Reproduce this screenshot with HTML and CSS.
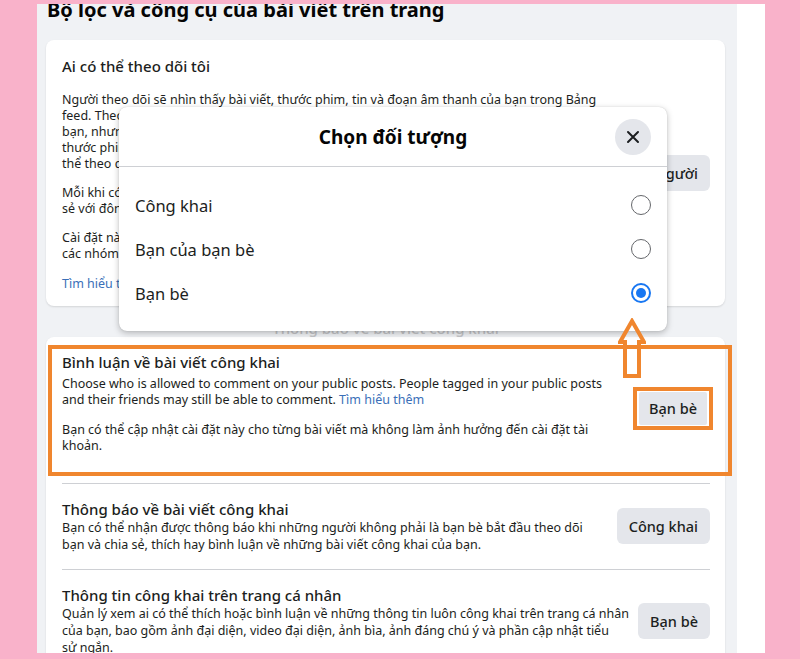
FILE: index.html
```html
<!DOCTYPE html>
<html lang="vi">
<head>
    <meta charset="UTF-8">
    <meta name="viewport" content="width=device-width, initial-scale=1.0">
    <title>Bộ lọc và công cụ của bài viết trên trang</title>
    <link rel="stylesheet" href="styles.css">
</head>
<body>
    <div class="khung">
        <div class="trang">
            <h1 class="tieu-de">Bộ lọc và công cụ của bài viết trên trang</h1>

            <div class="the">
                <div class="muc muc-dau">
                    <div class="noi-dung">
                        <h2>Ai có thể theo dõi tôi</h2>
                        <p>Người theo dõi sẽ nhìn thấy bài viết, thước phim, tin và đoạn âm thanh của bạn trong Bảng<br>feed. Theo mặc định, bạn bè sẽ theo dõi bạn, nhưng bạn cũng có thể cho phép mọi người<br>bạn, nhưng những người không phải là bạn bè cũng có thể xem bài viết,<br>thước phim và tin công khai của bạn. Hãy dùng cài đặt này để chọn ai có<br>thể theo dõi bạn.</p>
                        <p>Mỗi khi có nội dung công khai, bạn có thể chọn chia<br>sẻ với đông đảo mọi người hơn.</p>
                        <p>Cài đặt này không áp dụng cho những người theo dõi bạn trong<br>các nhóm và trang mà bạn tham gia.</p>
                        <a href="#" class="lien-ket">Tìm hiểu thêm</a>
                    </div>
                    <button class="nut">Mọi người</button>
                </div>
            </div>

            <div class="chu-mo">Thông báo về bài viết công khai</div>

            <div class="the the-hai">
                <span class="khung-cam"></span>
                <svg class="mui-ten" width="28" height="62" viewBox="0 0 28 62">
                    <polygon points="14,3 26,24 21,24 21,58 7,58 7,24 2,24" fill="none" stroke="#f0862e" stroke-width="4" stroke-linejoin="miter"/>
                </svg>

                <div class="muc muc-binh-luan">
                    <div class="noi-dung">
                        <h2>Bình luận về bài viết công khai</h2>
                        <p>Choose who is allowed to comment on your public posts. People tagged in your public posts<br>and their friends may still be able to comment. <a href="#" class="lien-ket">Tìm hiểu thêm</a></p>
                        <p>Bạn có thể cập nhật cài đặt này cho từng bài viết mà không làm ảnh hưởng đến cài đặt tài<br>khoản.</p>
                    </div>
                    <span class="vien-nut"><button class="nut">Bạn bè</button></span>
                </div>

                <div class="muc co-vach">
                    <div class="noi-dung">
                        <h2>Thông báo về bài viết công khai</h2>
                        <p>Bạn có thể nhận được thông báo khi những người không phải là bạn bè bắt đầu theo dõi<br>bạn và chia sẻ, thích hay bình luận về những bài viết công khai của bạn.</p>
                    </div>
                    <button class="nut">Công khai</button>
                </div>

                <div class="muc co-vach">
                    <div class="noi-dung">
                        <h2>Thông tin công khai trên trang cá nhân</h2>
                        <p>Quản lý xem ai có thể thích hoặc bình luận về những thông tin luôn công khai trên trang cá nhân<br>của bạn, bao gồm ảnh đại diện, video đại diện, ảnh bìa, ảnh đáng chú ý và phần cập nhật tiểu<br>sử ngắn.</p>
                    </div>
                    <button class="nut">Bạn bè</button>
                </div>
            </div>
        </div>
        <div class="le-phai"></div>

        <div class="hop-thoai">
            <div class="dau-hop">
                <h3>Chọn đối tượng</h3>
                <button class="nut-dong" aria-label="Đóng">
                    <svg width="14" height="14" viewBox="0 0 14 14">
                        <path d="M2 2 L12 12 M12 2 L2 12" stroke="#1c1e21" stroke-width="2" stroke-linecap="round"/>
                    </svg>
                </button>
            </div>
            <div class="lua-chon">
                <label class="dong">Công khai<span class="tron"></span></label>
                <label class="dong">Bạn của bạn bè<span class="tron"></span></label>
                <label class="dong">Bạn bè<span class="tron da-chon"></span></label>
            </div>
        </div>
    </div>
</body>
</html>
```

FILE: styles.css
```css
body {
    margin: 0;
    background-color: #f9b2ca;
    font-family: "Noto Sans", "Open Sans", sans-serif;
    color: #1c1e21;
}
.khung {
    position: relative;
    display: flex;
    width: 728px;
    height: 649px;
    margin: 4px 0 0 37px;
    overflow: hidden;
}
.trang {
    width: 700px;
    background-color: #f0f2f5;
    padding: 0 12px 0 9px;
    box-sizing: border-box;
}
.le-phai {
    flex: 1;
    background-color: #fff;
}
.tieu-de {
    font-size: 20px;
    line-height: 24px;
    font-weight: 700;
    margin: -6px 0 0 1px;
    color: #050505;
}
.the {
    position: relative;
    background-color: #fff;
    border-radius: 8px;
    margin-top: 18px;
    box-shadow: 0 1px 2px rgba(0, 0, 0, 0.12);
}
.muc {
    display: flex;
    align-items: center;
    gap: 24px;
    padding: 16px 15px 16px 16px;
}
.noi-dung {
    flex: 1;
    min-width: 0;
}
.muc h2 {
    font-size: 15px;
    line-height: 20px;
    font-weight: 500;
    margin: 0;
}
.muc p {
    font-size: 12.5px;
    line-height: 16px;
    margin: 0;
    white-space: nowrap;
}
.muc p + p {
    margin-top: 14px;
}
.muc-dau {
    padding-bottom: 14px;
}
.muc-dau h2 {
    margin-bottom: 16px;
}
.muc-dau p + p {
    margin-top: 13px;
}
.muc-dau .lien-ket {
    display: block;
    margin-top: 14px;
    font-size: 12.5px;
    line-height: 16px;
}
.muc-dau .nut {
    margin-bottom: 2px;
}
.lien-ket {
    color: #3a6fb8;
    text-decoration: none;
}
.nut {
    font-family: inherit;
    font-size: 14.5px;
    font-weight: 500;
    height: 36px;
    padding: 0 12px;
    background-color: #e4e6eb;
    color: #1c1e21;
    border: none;
    border-radius: 6px;
    cursor: pointer;
    flex-shrink: 0;
}
.chu-mo {
    text-align: center;
    color: #c4c5c8;
    font-size: 15px;
    font-weight: 500;
    line-height: 20px;
    margin: 12px 0 -1px;
}
.the-hai {
    margin-top: 0;
    border-radius: 8px 8px 0 0;
    padding-bottom: 20px;
}
.muc-binh-luan {
    padding: 15px 17px 29px 16px;
}
.muc-binh-luan h2 + p {
    margin-top: 4px;
}
.vien-nut {
    display: flex;
    border: 4px solid #f0862e;
    margin: 10px -5px 0 0;
}
.vien-nut .nut {
    height: 33px;
    padding: 0 10px;
    border-radius: 2px;
    margin: 1px 2px;
}
.co-vach {
    border-top: 1px solid #ced0d4;
    margin: 0 15px 0 16px;
    padding: 15px 0 16px 0;
}
.co-vach p {
    line-height: 17px;
}
.khung-cam {
    position: absolute;
    left: 2px;
    top: 8px;
    width: 684px;
    height: 131px;
    border: 4px solid #f0862e;
    box-sizing: border-box;
}
.mui-ten {
    position: absolute;
    left: 572px;
    top: -19px;
    z-index: 2;
}
.hop-thoai {
    position: absolute;
    z-index: 1;
    left: 82px;
    top: 103px;
    width: 548px;
    background-color: #fff;
    border-radius: 8px;
    box-shadow: 0 2px 6px rgba(0, 0, 0, 0.25), 0 0 1px rgba(0, 0, 0, 0.2);
}
.dau-hop {
    position: relative;
    height: 59px;
    display: flex;
    align-items: center;
    justify-content: center;
    border-bottom: 1px solid #ced0d4;
}
.dau-hop h3 {
    margin: 0;
    font-size: 19px;
    font-weight: 700;
    color: #050505;
}
.nut-dong {
    position: absolute;
    right: 16px;
    top: 12px;
    width: 36px;
    height: 36px;
    border-radius: 50%;
    border: none;
    background-color: #e4e6eb;
    display: flex;
    align-items: center;
    justify-content: center;
    padding: 0;
}
.lua-chon {
    padding: 16px 16px 16px;
}
.dong {
    display: flex;
    align-items: center;
    justify-content: space-between;
    height: 44px;
    font-size: 16.5px;
    color: #1c1e21;
}
.tron {
    width: 20px;
    height: 20px;
    border: 1.5px solid #65676b;
    border-radius: 50%;
    box-sizing: border-box;
}
.tron.da-chon {
    border: 2.5px solid #1877f2;
    display: flex;
    align-items: center;
    justify-content: center;
}
.tron.da-chon::after {
    content: "";
    width: 10px;
    height: 10px;
    border-radius: 50%;
    background-color: #1877f2;
}
```
